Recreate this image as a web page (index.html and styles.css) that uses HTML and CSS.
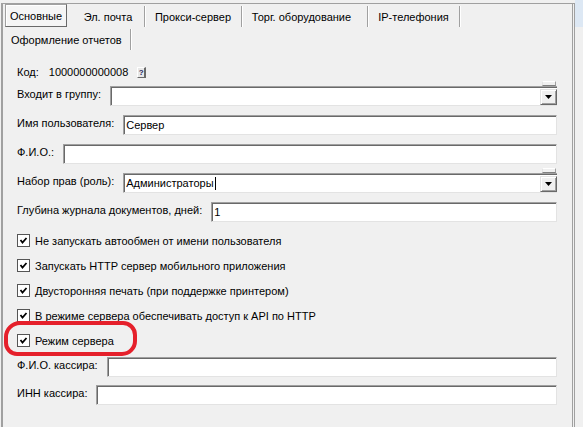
FILE: index.html
```html
<!DOCTYPE html>
<html lang="ru">
<head>
<meta charset="utf-8">
<title>Пользователь</title>
<link rel="stylesheet" href="styles.css">
</head>
<body>
<div class="screen">
  <div class="frame">
    <div class="tabs">
      <div class="tab-row">
        <div class="tab tab-active tab-main">Основные</div>
        <div class="tab tab-mail">Эл. почта</div>
        <div class="tab tab-proxy">Прокси-сервер</div>
        <div class="tab tab-equip">Торг. оборудование</div>
        <div class="tab tab-ip">IP-телефония</div>
      </div>
      <div class="tab-row">
        <div class="tab tab-reports">Оформление отчетов</div>
      </div>
    </div>

    <div class="form">
      <div class="code-row">
        <span>Код:</span>
        <span class="code-value">1000000000008</span>
        <span class="help-btn">?</span>
      </div>

      <div class="field field-first">
        <span class="label">Входит в группу:</span>
        <div class="input combo">
          <span class="combo-text"></span>
          <span class="combo-btn"><svg width="7" height="4" viewBox="0 0 7 4"><polygon points="0,0 7,0 3.5,4" fill="#000"/></svg></span>
        </div>
      </div>

      <div class="field">
        <span class="label">Имя пользователя:</span>
        <div class="input">Сервер</div>
      </div>

      <div class="field">
        <span class="label">Ф.И.О.:</span>
        <div class="input"></div>
      </div>

      <div class="field">
        <span class="label">Набор прав (роль):</span>
        <div class="input combo">
          <span class="combo-text">Администраторы<span class="caret"></span></span>
          <span class="combo-btn"><svg width="7" height="4" viewBox="0 0 7 4"><polygon points="0,0 7,0 3.5,4" fill="#000"/></svg></span>
        </div>
      </div>

      <div class="field">
        <span class="label">Глубина журнала документов, дней:</span>
        <div class="input">1</div>
      </div>

      <div class="checks">
        <div class="check"><span class="box"><svg width="11" height="11" viewBox="0 0 11 11"><polyline points="2.5,5 4.5,7.5 8.5,3" fill="none" stroke="#000" stroke-width="1.8"/></svg></span>Не запускать автообмен от имени пользователя</div>
        <div class="check"><span class="box"><svg width="11" height="11" viewBox="0 0 11 11"><polyline points="2.5,5 4.5,7.5 8.5,3" fill="none" stroke="#000" stroke-width="1.8"/></svg></span>Запускать HTTP сервер мобильного приложения</div>
        <div class="check"><span class="box"><svg width="11" height="11" viewBox="0 0 11 11"><polyline points="2.5,5 4.5,7.5 8.5,3" fill="none" stroke="#000" stroke-width="1.8"/></svg></span>Двусторонняя печать (при поддержке принтером)</div>
        <div class="check"><span class="box"><svg width="11" height="11" viewBox="0 0 11 11"><polyline points="2.5,5 4.5,7.5 8.5,3" fill="none" stroke="#000" stroke-width="1.8"/></svg></span>В режиме сервера обеспечивать доступ к API по HTTP</div>
        <div class="check check-marked"><span class="box"><svg width="11" height="11" viewBox="0 0 11 11"><polyline points="2.5,5 4.5,7.5 8.5,3" fill="none" stroke="#000" stroke-width="1.8"/></svg></span>Режим сервера</div>
      </div>

      <div class="field field-cashier">
        <span class="label">Ф.И.О. кассира:</span>
        <div class="input"></div>
      </div>

      <div class="field field-inn">
        <span class="label">ИНН кассира:</span>
        <div class="input"></div>
      </div>
    </div>
  </div>
  <div class="strip"><div class="strip-top"></div></div>
</div>
</body>
</html>
```

FILE: styles.css
```css
html, body {
  margin: 0;
  padding: 0;
}
body {
  background: #f0f0f0;
  font-family: "Liberation Sans", Arial, sans-serif;
  font-size: 11px;
  color: #000;
  width: 583px;
  height: 427px;
  overflow: hidden;
}
.screen {
  display: flex;
  height: 427px;
}
.frame {
  box-sizing: border-box;
  width: 574px;
  margin: 3px 0 0 1px;
  border-top: 1px solid #a0a0a0;
  border-left: 2px solid #a0a0a0;
  border-right: 3px double #a0a0a0;
  display: flex;
  flex-direction: column;
}
.strip {
  flex: 1;
}
.strip-top {
  height: 27px;
  background: #dde8f4;
}

/* tabs */
.tabs {
  padding-left: 2px;
}
.tab-row {
  display: flex;
  height: 23px;
}
.tab {
  box-sizing: border-box;
  display: flex;
  align-items: center;
  justify-content: center;
  height: 21px;
  margin-top: 2px;
  border-right: 1px solid #a0a0a0;
  box-shadow: 1px 0 0 #fff;
  white-space: nowrap;
}
.tab-active {
  height: 23px;
  margin-top: 0;
  border-top: 1px solid #a0a0a0;
  border-left: 1px solid #a0a0a0;
  border-right: 1px solid #696969;
  border-bottom: 1px solid #696969;
  box-shadow: inset 1px 1px 0 #fff;
  background: #f5f5f5;
}
.tab-main { width: 62px; }
.tab-mail { width: 78px; padding-left: 5px; }
.tab-proxy { width: 97px; }
.tab-equip { width: 126px; padding-right: 6px; }
.tab-ip { width: 92px; }
.tab-reports { width: 126px; justify-content: flex-start; padding-left: 6px; }

/* form */
.form {
  padding: 15px 15px 0 14px;
  display: flex;
  flex-direction: column;
}
.code-row {
  display: flex;
  align-items: center;
  height: 14px;
}
.code-value {
  margin-left: 10px;
}
.help-btn {
  box-sizing: border-box;
  width: 9px;
  height: 11px;
  margin-left: 9px;
  border-top: 1px solid #fff;
  border-left: 1px solid #fff;
  border-right: 2px solid #696969;
  border-bottom: 1px solid #696969;
  background: #e8e8e8;
  font-size: 8px;
  font-weight: bold;
  line-height: 9px;
  text-align: center;
  color: #1a1a5a;
}
.field {
  display: flex;
  align-items: center;
  gap: 9px;
  margin-top: 9px;
}
.field-first {
  margin-top: 7px;
}
.field-cashier {
  margin-top: 4px;
}
.field-inn {
  margin-top: 8px;
}
.label {
  white-space: nowrap;
  padding-bottom: 4px;
}
.input {
  box-sizing: border-box;
  flex: 1;
  height: 20px;
  background: #fff;
  border-top: 1px solid #a0a0a0;
  border-left: 1px solid #a0a0a0;
  border-right: 1px solid #e3e3e3;
  border-bottom: 1px solid #e3e3e3;
  box-shadow: inset 1px 1px 0 #696969;
  padding-left: 2px;
  display: flex;
  align-items: center;
  line-height: 14px;
}
.combo {
  position: relative;
  justify-content: space-between;
  padding-right: 0;
  border-right: 0;
}
.combo::before {
  content: "";
  position: absolute;
  right: 1px;
  top: -6px;
  width: 12px;
  height: 3px;
  background: #f0f0f0;
  border-top: 1px solid #fff;
  border-left: 1px solid #e3e3e3;
  border-right: 1px solid #a0a0a0;
  border-bottom: 1px solid #808080;
}
.combo-text {
  display: flex;
  align-items: center;
}
.caret {
  display: inline-block;
  width: 1px;
  height: 13px;
  background: #000;
  margin-left: 1px;
}
.combo-btn {
  box-sizing: border-box;
  width: 17px;
  height: 16px;
  margin-top: 1px;
  background: #f0f0f0;
  border-top: 1px solid #e3e3e3;
  border-left: 1px solid #e3e3e3;
  border-right: 1px solid #696969;
  border-bottom: 1px solid #696969;
  box-shadow: inset 1px 1px 0 #fff, inset -1px -1px 0 #a0a0a0;
  display: flex;
  align-items: center;
  justify-content: center;
}
.combo-btn svg {
  display: block;
}

/* checkboxes */
.checks {
  margin-top: 6px;
  display: flex;
  flex-direction: column;
}
.check {
  display: flex;
  align-items: center;
  gap: 5px;
  height: 25px;
  white-space: nowrap;
}
.box {
  box-sizing: border-box;
  width: 13px;
  height: 13px;
  background: #fff;
  border: 1px solid #555;
  flex: none;
}
.box svg {
  display: block;
}
.check-marked {
  position: relative;
}
.check-marked::after {
  content: "";
  position: absolute;
  left: -13px;
  top: -7px;
  width: 133px;
  height: 35px;
  box-sizing: border-box;
  border: 4px solid #e5202b;
  border-radius: 16px 14px 15px 13px;
  pointer-events: none;
}
```
